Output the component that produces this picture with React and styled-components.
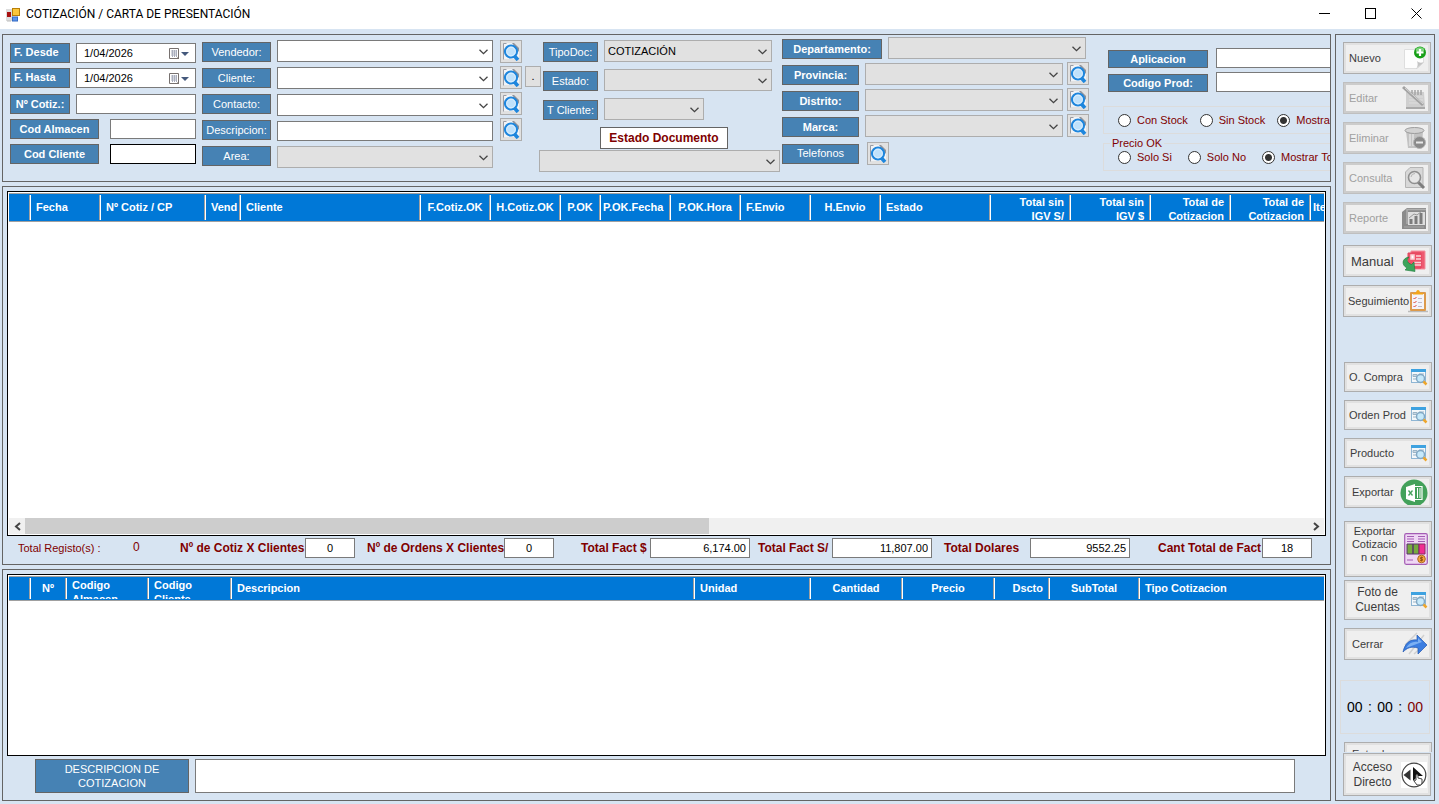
import React from "react";
import styled, { createGlobalStyle, css } from "styled-components";

const Global = createGlobalStyle`
  *, *::before, *::after { box-sizing: border-box; }
  body { margin: 0; background: #d7e4f2; }
  body, button, input, select, textarea {
    font-family: "Liberation Sans", Arial, sans-serif;
    font-size: 11px;
    line-height: 13px;
    color: #000;
  }
`;

/* ---------- window ---------- */
const Window = styled.div`
  min-height: 100vh;
  display: flex;
  flex-direction: column;
`;
const TitleBar = styled.header`
  height: 29px;
  flex: none;
  display: flex;
  align-items: center;
  gap: 6px;
  padding-left: 6px;
  background: #fff;
`;
const Title = styled.h1`
  margin: 0;
  flex: 1;
  font: 400 12px/16px Roboto, "Open Sans", sans-serif;
  padding-bottom: 2px;
`;
const WindowButton = styled.button`
  width: 46px;
  height: 28px;
  padding: 0 0 2px;
  border: 0;
  background: none;
  display: grid;
  place-items: center;
`;
const Body = styled.div`
  flex: 1;
  display: grid;
  grid-template-columns: minmax(0, 1fr) 100px;
  gap: 4px;
  padding: 5px 4px 3px 2px;
`;
const Main = styled.main`
  display: flex;
  flex-direction: column;
  gap: 4px;
  min-width: 0;
`;
const panel = css`
  border: 1px solid #646464;
  background: #d7e4f2;
`;

/* ---------- filters ---------- */
const Filters = styled.form`
  ${panel}
  flex: none;
  height: 148px;
  display: flex;
  align-items: flex-start;
  overflow: hidden;
  padding-left: 7px;
`;
const Column = styled.div`
  flex: none;
  display: flex;
  flex-direction: column;
  align-items: flex-start;
  gap: ${(p) => p.$gap}px;
  padding-top: ${(p) => p.$top || 0}px;
  margin-right: ${(p) => p.$after || 0}px;
`;
const Row = styled.div`
  display: flex;
  flex: none;
  align-items: ${(p) => p.$align || "flex-start"};
  gap: ${(p) => p.$gap || 0}px;
  min-height: ${(p) => p.$min || 0}px;
  padding-left: ${(p) => p.$indent || 0}px;
  margin-top: ${(p) => p.$before || 0}px;
`;
const Tag = styled.label`
  flex: none;
  display: flex;
  align-items: center;
  justify-content: ${(p) => (p.$left ? "flex-start" : "center")};
  padding-left: ${(p) => (p.$left ? 3 : 0)}px;
  padding-bottom: ${(p) => (p.$left ? 2 : 0)}px;
  width: ${(p) => p.$w}px;
  height: ${(p) => p.$h || 20}px;
  border: 1px solid #646464;
  background: #4682b4;
  color: #fff;
  font-weight: ${(p) => (p.$bold ? 700 : 400)};
  white-space: nowrap;
`;
const TextBox = styled.input`
  flex: none;
  width: ${(p) => p.$w}px;
  height: 20px;
  padding: 0 3px;
  border: 1px solid ${(p) => (p.$active ? "#000" : "#7a7a7a")};
  border-radius: 0;
  background: #fff;
  text-align: ${(p) => p.$align || "left"};
  outline: 0;
`;
const DateBox = styled.div`
  display: flex;
  align-items: center;
  width: 120px;
  height: 20px;
  border: 1px solid #7a7a7a;
  background: #fff;
`;
const DateInput = styled.input`
  flex: 1;
  min-width: 0;
  height: 18px;
  border: 0;
  padding: 0 0 0 7px;
  background: none;
  outline: 0;
`;
const DateButton = styled.button`
  border: 0;
  background: none;
  padding: 0;
  width: 32px;
  height: 18px;
  display: grid;
  place-items: center;
`;
const SelectShell = styled.div`
  position: relative;
  flex: none;
  width: ${(p) => p.$w}px;
  height: 22px;
  svg {
    position: absolute;
    right: 5px;
    top: 9px;
    pointer-events: none;
  }
`;
const SelectBox = styled.select`
  appearance: none;
  width: 100%;
  height: 100%;
  padding: 0 20px 0 3px;
  border: 1px solid ${(p) => (p.$white ? "#7a7a7a" : "#adadad")};
  border-radius: 0;
  background: ${(p) => (p.$white ? "#fff" : "#e1e1e1")};
  outline: 0;
`;
const SmallButton = styled.button`
  flex: none;
  width: ${(p) => p.$w || 22}px;
  height: ${(p) => p.$h || 23}px;
  padding: 0;
  border: 1px solid #adadad;
  background: #e1e1e1;
  display: grid;
  place-items: center;
`;
const StatusHeading = styled.label`
  width: 128px;
  height: 22px;
  display: grid;
  place-items: center;
  align-self: center;
  border: 1px solid #646464;
  background: #fff;
  color: #800000;
  font-size: 12px;
  font-weight: 700;
`;
const RadioGroup = styled.fieldset`
  position: relative;
  margin: 0;
  width: 260px;
  height: 28px;
  padding: 0 0 0 14px;
  border: 1px solid #dcdcdc;
  display: flex;
  align-items: center;
  gap: ${(p) => p.$gap}px;
`;
const Legend = styled.legend`
  position: absolute;
  left: 6px;
  top: -7px;
  padding: 0 2px;
  background: #d7e4f2;
  color: #800000;
`;
const RadioLabel = styled.label`
  display: flex;
  align-items: center;
  gap: 6px;
  color: #800000;
  white-space: nowrap;
`;
const RadioInput = styled.input`
  appearance: none;
  flex: none;
  width: 13px;
  height: 13px;
  margin: 0;
  border: 1px solid #333;
  border-radius: 50%;
  background: #fff;
  &:checked {
    background: radial-gradient(circle, #333 0 3px, #fff 4px);
  }
`;

/* ---------- grids ---------- */
const ListPanel = styled.section`
  ${panel}
  flex: ${(p) => (p.$grow ? "1 0 auto" : "none")};
  display: flex;
  flex-direction: column;
  padding: 4px;
`;
const GridBox = styled.div`
  flex: 1 0 auto;
  min-height: ${(p) => p.$min}px;
  border: 1px solid #000;
  background: #fff;
  padding: 1px 1px 0;
  display: flex;
  flex-direction: column;
  overflow: hidden;
`;
const TableClip = styled.div`
  flex: 1;
  overflow: hidden;
`;
const Table = styled.table`
  table-layout: fixed;
  border-collapse: collapse;
  width: ${(p) => (p.$w ? `${p.$w}px` : "100%")};
`;
const HeadCell = styled.th`
  padding: 0 0 1px;
  height: ${(p) => p.$h + 3}px;
  background: #0078d7;
  border-top: 1px solid #a0a0a0;
  border-bottom: 1px solid #a0a0a0;
  &:last-child > div {
    box-shadow: none;
  }
`;
const HeadText = styled.div`
  height: ${(p) => p.$h}px;
  overflow: hidden;
  padding: 0 7px 0 ${(p) => (p.$tight ? 2 : 5)}px;
  display: grid;
  align-content: safe center;
  text-align: ${(p) => p.$align || "left"};
  color: #fff;
  font-weight: 700;
  line-height: 14px;
  white-space: ${(p) => (p.$wrap ? "pre-line" : "nowrap")};
  box-shadow: inset -1px 0 #fff, inset -2px 0 #a0a0a0;
`;
const ScrollBar = styled.div`
  flex: none;
  height: 17px;
  display: grid;
  grid-template-columns: 16px minmax(0, 1fr) 16px;
  background: #f0f0f0;
  border-bottom: 1px solid #fff;
`;
const ScrollArrow = styled.button`
  border: 0;
  padding: 0;
  background: none;
  display: grid;
  place-items: center;
`;
const ScrollThumb = styled.div`
  width: 53.3%;
  height: 16px;
  background: #cdcdcd;
`;
const Totals = styled.div`
  flex: none;
  height: 24px;
  padding: 1px 0 0 11px;
  display: grid;
  grid-template-columns: 162px 187px 214px 177px 186px 214px 154px;
`;
const Total = styled.div`
  display: flex;
  align-items: center;
  height: 21px;
`;
const TotalLabel = styled.label`
  flex: none;
  width: ${(p) => p.$w}px;
  padding-top: 2px;
  color: #800000;
  font-size: ${(p) => (p.$plain ? 11 : 12)}px;
  font-weight: ${(p) => (p.$plain ? 400 : 700)};
  white-space: nowrap;
`;
const Count = styled.output`
  color: #800000;
  font-size: 12px;
`;
const Notes = styled.div`
  flex: none;
  display: grid;
  grid-template-columns: 154px minmax(0, 1fr);
  gap: 6px;
  padding: 3px 31px 3px 28px;
`;
const NotesLabel = styled.label`
  display: grid;
  place-items: center;
  text-align: center;
  height: 34px;
  border: 1px solid #646464;
  background: #4682b4;
  color: #fff;
  line-height: 14px;
  padding: 0 24px;
`;
const NotesBox = styled.textarea`
  height: 34px;
  resize: none;
  border: 1px solid #7a7a7a;
  background: #fff;
  outline: 0;
`;

/* ---------- side bar ---------- */
const Side = styled.aside`
  ${panel}
  display: flex;
  flex-direction: column;
  padding: 7px 2px 0 7px;
`;
const SideGroup = styled.div`
  display: flex;
  flex-direction: column;
  gap: 8px;
  padding-left: ${(p) => p.$indent || 0}px;
  padding-right: ${(p) => p.$inset || 0}px;
  margin-bottom: ${(p) => p.$after || 0}px;
`;
const SideButton = styled.button`
  width: 100%;
  height: ${(p) => p.$h || 32}px;
  flex: none;
  display: grid;
  grid-template-columns: minmax(0, 1fr) auto;
  align-items: center;
  padding: 0 3px 0 ${(p) => (p.$center ? 0 : p.$near ? 4 : p.$far ? 7 : 5)}px;
  border: 1px solid #adadad;
  background: #efefef;
  box-shadow: inset 0 0 0 2px #e1e1e1;
  color: #3c3c3c;
  font-size: ${(p) => p.$size || 11}px;
  line-height: ${(p) => (p.$size ? 15 : 13)}px;
  text-align: ${(p) => (p.$center ? "center" : "left")};
  white-space: ${(p) => (p.$center ? "pre-line" : "nowrap")};
  &:disabled {
    border-color: #bfbfbf;
    box-shadow: inset 0 0 0 2px #ccc;
    color: #a0a0a0;
  }
`;
const TopText = styled.span`
  align-self: start;
  padding-top: 3px;
`;
const HiddenSlot = styled.div`
  height: 10px;
  overflow: hidden;
  margin-bottom: 1px;
  padding-left: 1px;
`;
const Timer = styled.div`
  height: 54px;
  margin: 0 2px 8px -3px;
  border: 1px solid #dcdcdc;
  display: flex;
  align-items: center;
  justify-content: space-between;
  padding: 0 6px;
  font-size: 14px;
`;
const Seconds = styled.span`
  color: #800000;
`;

/* ---------- drawings ---------- */
const Chevron = () => (
  <svg width="9" height="6" viewBox="0 0 9 6" fill="none" stroke="#444" strokeWidth="1.3">
    <path d="M.5.7l4 4 4-4" />
  </svg>
);
const Lens = () => (
  <svg width="18" height="19" viewBox="0 0 18 19">
    <path d="M2 1h9l6 6v10H2z" fill="#f1f3f6" />
    <path d="M1.500 17.500V1.500h3" fill="none" stroke="#9a9da5" />
    <path d="M10 1h2l5 5v4z" fill="#8d929c" />
    <path d="M12 13.500l4 4.500" stroke="#1e86dd" strokeWidth="3.600" />
    <circle cx="9" cy="9.500" r="6" fill="#bfe1fb" stroke="#1e86dd" strokeWidth="2.200" />
    <circle cx="9" cy="9.500" r="4.400" fill="none" stroke="#e9f5ff" strokeWidth=".8" />
  </svg>
);
const CalendarIcon = () => (
  <svg width="22" height="13" viewBox="0 0 22 13">
    <path d="M1.500 1.500h9v10h-9z" fill="#fff" stroke="#77716f" />
    <path d="M3 4h6M3 6h6M3 8h6M4.500 3v7M6.500 3v7M8.500 3v7" stroke="#a9aebd" />
    <path d="M8 12l3-3v3z" fill="#77716f" />
    <path d="M13 5h8l-4 4z" fill="#44597c" />
  </svg>
);
const FormIcon = () => (
  <svg width="14" height="14" viewBox="0 0 14 14">
    <rect y="1" width="7" height="12" fill="#ddd" />
    <rect x="1" y="4" width="4" height="5" fill="#a81010" />
    <rect x="6.500" y=".5" width="7" height="7" fill="#fbc63a" stroke="#b87f08" />
    <rect x="6.500" y="9" width="5" height="4" fill="#5c96ec" stroke="#346bc4" />
    <path d="M1 13h4" stroke="#bbb" />
  </svg>
);
const NewIcon = () => (
  <svg width="24" height="26" viewBox="0 0 24 26">
    <path d="M1.500 4.500h19v13l-6 6h-13z" fill="#fdfdfd" stroke="#dedede" />
    <path d="M13 24c2-3 2-5 1-8 2 2 4 2 7 1z" fill="#c4c4c4" />
    <circle cx="17" cy="7.500" r="6" fill="#17a017" />
    <ellipse cx="17" cy="4.800" rx="4.200" ry="2.600" fill="#7bd47b" />
    <path d="M17 4v7M13.500 7.500h7" stroke="#fff" strokeWidth="2.200" />
  </svg>
);
const EditIcon = () => (
  <svg width="26" height="26" viewBox="0 0 26 26">
    <path d="M5 7h18l1 15H5z" fill="#cfcfcf" />
    <path d="M5 22h19v2H5z" fill="#aaa" />
    <path d="M11 5v5M14 5v5M17 5v5M20 5v5" stroke="#a5a5a5" strokeWidth="1.500" />
    <path d="M8 12h14M8 15h14M8 18h14" stroke="#dedede" />
    <path d="M2 2l20 18" stroke="#a2a2a2" strokeWidth="3" />
    <path d="M4 3l18 16" stroke="#d6d6d6" />
  </svg>
);
const DeleteIcon = () => (
  <svg width="24" height="26" viewBox="0 0 24 26">
    <path d="M3 6h17l-1 17H5z" fill="#c2c2c2" />
    <path d="M7 9v12M10 9v12" stroke="#e2e2e2" strokeWidth="1.500" />
    <ellipse cx="11.500" cy="5.500" rx="9.500" ry="3" fill="#d2d2d2" stroke="#9d9d9d" />
    <circle cx="16.500" cy="17.500" r="6" fill="#8a8a8a" stroke="#b5b5b5" />
    <path d="M13 17.500h7" stroke="#e8e8e8" strokeWidth="2" />
  </svg>
);
const QueryIcon = () => (
  <svg width="24" height="26" viewBox="0 0 24 26">
    <path d="M7 2.500h13v20H2.500V7z" fill="#d8d8d8" stroke="#b4b4b4" />
    <path d="M15 17l6 6" stroke="#7d7d7d" strokeWidth="3" />
    <circle cx="11.500" cy="12.500" r="6" fill="#e6e6e6" stroke="#8f8f8f" strokeWidth="1.600" />
    <path d="M8 12a4 4 0 0 1 4-3.500" fill="none" stroke="#b5b5b5" />
  </svg>
);
const ReportIcon = () => (
  <svg width="26" height="26" viewBox="0 0 26 26">
    <path d="M1 7l5-4h19v21H1z" fill="#8b8b8b" />
    <path d="M6 4.500h19M6 4v15" stroke="#b0b0b0" strokeWidth="1.500" />
    <path d="M7 7h17v13H7z" fill="#dedede" />
    <path d="M10 19v-5M15 19v-8M20 19V8" stroke="#7c7c7c" strokeWidth="3" />
    <path d="M8 13l5-4 3 1 5-4" stroke="#989898" fill="none" />
    <path d="M3 22h20" stroke="#a8a8a8" />
  </svg>
);
const ManualIcon = () => (
  <svg width="26" height="26" viewBox="0 0 26 26">
    <path d="M9 3h14v18H9z" fill="#ee5a70" stroke="#f3909d" />
    <path d="M6 5h13v15H6z" fill="#ef5268" stroke="#e0455c" />
    <path d="M9 7h3v4H9zM14 8h5M14 11h5M12 14.500h7M12 17h7" stroke="#fbd3d8" strokeWidth="1.500" fill="#fff" />
    <path d="M7 9c-7 1-8 8-2 11l-2 2 10 1.500-1-9.500-2.500 2.500C5 15 4 12 7 9z" fill="#3da55b" stroke="#1c7a3a" strokeWidth=".6" />
  </svg>
);
const ClipboardIcon = () => (
  <svg width="20" height="24" viewBox="0 0 20 24">
    <path d="M0 22.500h20" stroke="#bbb" strokeWidth="1.500" />
    <rect x="2" y="3" width="16" height="19" rx="1" fill="#dc9a4c" />
    <rect x="4" y="5" width="12" height="15" fill="#f4f4fa" />
    <path d="M5 5.500V4h3c0-4 4-4 4 0h3v1.500z" fill="#f4a619" />
    <path d="M5.500 9l1 1 2-2M5.500 13l1 1 2-2M5.500 17l1 1 2-2" stroke="#e04a3a" fill="none" />
    <path d="M10 9.500h4M10 13.500h4M10 17.500h4" stroke="#bcbccc" />
  </svg>
);
const FindFormIcon = () => (
  <svg width="18" height="18" viewBox="0 0 18 18">
    <rect x="1.500" y="1.500" width="14" height="13" fill="#f4f8fb" stroke="#8fb6d4" />
    <path d="M1 1h15v3H1z" fill="#3ea2e0" />
    <path d="M3 6.500h4v2H3zM3 11h4M9 6h5" stroke="#9bb4c6" fill="#c9d8e4" />
    <circle cx="10.500" cy="10.500" r="4" fill="#c6e9fa" stroke="#82a8c4" strokeWidth="1.500" />
    <path d="M13.500 13.500l3 3" stroke="#eda62c" strokeWidth="2.500" />
  </svg>
);
const ExcelIcon = () => (
  <svg width="28" height="26" viewBox="0 0 28 26">
    <circle cx="14" cy="14" r="13.500" fill="#43a15a" />
    <path d="M15 7.500h7v13h-7" fill="none" stroke="#fff" strokeWidth="1.200" />
    <path d="M17.500 9v10M20 9v10" stroke="#fff" />
    <path d="M6 8l9-3v18l-9-3z" fill="#fff" />
    <path d="M8.500 11.500l4 5M12.500 11.500l-4 5" stroke="#43a15a" strokeWidth="1.300" />
  </svg>
);
const InvoiceIcon = () => (
  <svg width="24" height="32" viewBox="0 0 24 32">
    <rect x=".7" y=".7" width="22.600" height="30.600" rx="1.500" fill="#efd7f4" stroke="#a45cb4" strokeWidth="1.200" />
    <path d="M3 3.500h7M3 6h7M3 8.500h7M14 3.500h7M14 6h7M14 8.500h7M3 27h6" stroke="#a45cb4" />
    <path d="M3 11h6v10H3zM9 11h6v10H9z" fill="#76a93f" stroke="#59366b" />
    <path d="M15 11h6v10h-6z" fill="#f02c91" stroke="#8a2864" />
    <circle cx="17.500" cy="26" r="3.800" fill="#f3a53c" stroke="#b06b22" />
    <path d="M19 24.500h-2.500v1.500h2v1.500H16M17.500 23.500v5" stroke="#8c4b14" fill="none" strokeWidth=".8" />
  </svg>
);
const ExitIcon = () => (
  <svg width="26" height="24" viewBox="0 0 26 24">
    <path d="M3 13L15 1M7 22L22 3M12 22l11-10" stroke="#d0d0d0" strokeWidth="1.500" />
    <path d="M1 20C3 11 8 7 15 8V3l10 10-9 9v-6C9 14 5 16 1 20z" fill="#3b7de0" stroke="#2559b0" strokeWidth=".7" />
    <path d="M4 16c3-5 7-7 12-6V6l4 4z" fill="#7bb0f3" />
  </svg>
);
const ShortcutIcon = () => (
  <svg width="26" height="26" viewBox="0 0 26 26">
    <rect width="26" height="26" fill="#fff" />
    <circle cx="13" cy="13" r="11.800" fill="#fff" stroke="#444" strokeWidth="1.200" />
    <path d="M9.500 7.500v11l-7-5.500z" fill="#333" />
    <path d="M12 5l10 9h-5l-5 5z" fill="#111" />
    <path d="M15 13c1-1 2 0 2 1v2l4 1v4l-1 2h-4l-3-4 2-1z" fill="#fff" stroke="#444" />
  </svg>
);

/* ---------- composed controls ---------- */
const Combo = ({ id, w, white, value, label }) => (
  <SelectShell $w={w}>
    <SelectBox id={id} $white={white} aria-label={label}>
      <option>{value || ""}</option>
    </SelectBox>
    <Chevron />
  </SelectShell>
);
const DateField = ({ id, value }) => (
  <DateBox>
    <DateInput id={id} defaultValue={value} />
    <DateButton type="button" aria-label="Abrir calendario"><CalendarIcon /></DateButton>
  </DateBox>
);
const Search = ({ label }) => (
  <SmallButton type="button" aria-label={`Buscar ${label}`}><Lens /></SmallButton>
);
const Radio = ({ name, text, checked }) => (
  <RadioLabel>
    <RadioInput type="radio" name={name} defaultChecked={checked} />
    {text}
  </RadioLabel>
);
const Grid = ({ columns, width, height }) => (
  <TableClip>
    <Table $w={width}>
      <colgroup>
        {columns.map(([, w], i) => <col key={i} style={w ? { width: w } : undefined} />)}
      </colgroup>
      <thead>
        <tr>
          {columns.map(([text, , align, tight], i) => (
            <HeadCell key={i} $h={height}>
              <HeadText $h={height} $align={align} $tight={tight} $wrap={text.includes("\n")}>{text}</HeadText>
            </HeadCell>
          ))}
        </tr>
      </thead>
      <tbody />
    </Table>
  </TableClip>
);

const QUOTES = [
  ["", 22], ["Fecha", 70], ["Nº Cotiz / CP", 105], ["Vend", 35], ["Cliente", 180],
  ["F.Cotiz.OK", 70, "center"], ["H.Cotiz.OK", 70, "center"], ["P.OK", 40, "center"],
  ["P.OK.Fecha", 70, "left", true], ["P.OK.Hora", 70, "center"], ["F.Envio", 70],
  ["H.Envio", 70, "center"], ["Estado", 110], ["Total sin\nIGV S/", 80, "right"],
  ["Total sin\nIGV $", 80, "right"], ["Total de\nCotizacion", 80, "right"],
  ["Total de\nCotizacion", 80, "right"], ["Items", 80, "left", true],
];
const ITEMS = [
  ["", 22], ["Nº", 36, "center"], ["Codigo\nAlmacen", 82], ["Codigo\nCliente", 83],
  ["Descripcion", 463], ["Unidad", 116], ["Cantidad", 92, "center"], ["Precio", 92, "center"],
  ["Dscto", 55, "right"], ["SubTotal", 90, "center"], ["Tipo Cotizacion", null],
];
const TOTALS = [
  ["Nº de Cotiz X Clientes", 125, "0", 50, "center"],
  ["Nº de Ordens X Clientes", 137, "0", 50, "center"],
  ["Total Fact $", 69, "6,174.00", 100, "right"],
  ["Total Fact S/", 74, "11,807.00", 100, "right"],
  ["Total Dolares", 86, "9552.25", 100, "right"],
  ["Cant Total de Fact", 104, "18", 50, "center"],
];

export default function App() {
  return (
    <>
      <Global />
      <Window>
        <TitleBar>
          <FormIcon />
          <Title>COTIZACIÓN / CARTA DE PRESENTACIÓN</Title>
          <Row>
            <WindowButton aria-label="Minimizar">
              <svg width="11" height="11"><path d="M0 5.500h11" stroke="#000" /></svg>
            </WindowButton>
            <WindowButton aria-label="Maximizar">
              <svg width="11" height="11"><rect x=".5" y=".5" width="10" height="10" fill="none" stroke="#000" /></svg>
            </WindowButton>
            <WindowButton aria-label="Cerrar ventana">
              <svg width="11" height="11"><path d="M.5.5l10 10M10.500.5l-10 10" stroke="#000" /></svg>
            </WindowButton>
          </Row>
        </TitleBar>
        <Body>
          <Main>
            <Filters>
              <Column $gap={5} $top={8} $after={6}>
                <Row $gap={6}><Tag $w={60} $bold $left htmlFor="desde">F. Desde</Tag><DateField id="desde" value="1/04/2026" /></Row>
                <Row $gap={6}><Tag $w={60} $bold $left htmlFor="hasta">F. Hasta</Tag><DateField id="hasta" value="1/04/2026" /></Row>
                <Row $gap={6} $before={1}><Tag $w={60} $bold htmlFor="num">Nº Cotiz.:</Tag><TextBox id="num" $w={120} /></Row>
                <Row $gap={11}><Tag $w={89} $bold htmlFor="alm">Cod Almacen</Tag><TextBox id="alm" $w={86} /></Row>
                <Row $gap={11}><Tag $w={89} $bold htmlFor="cli">Cod Cliente</Tag><TextBox id="cli" $w={86} $active /></Row>
              </Column>
              <Column $gap={6} $top={7} $after={6}>
                <Tag $w={69} htmlFor="vendedor">Vendedor:</Tag>
                <Tag $w={69} htmlFor="cliente">Cliente:</Tag>
                <Tag $w={69} htmlFor="contacto">Contacto:</Tag>
                <Tag $w={69} htmlFor="descripcion">Descripcion:</Tag>
                <Tag $w={69} htmlFor="area">Area:</Tag>
              </Column>
              <Column $gap={5} $top={5} $after={7}>
                <Combo id="vendedor" w={216} white />
                <Combo id="cliente" w={216} white />
                <Combo id="contacto" w={216} white />
                <TextBox id="descripcion" $w={216} />
                <Combo id="area" w={216} />
              </Column>
              <Column $gap={3} $top={5} $after={-2}>
                <Search label="vendedor" />
                <Row $gap={3}>
                  <Search label="cliente" />
                  <SmallButton type="button" $w={16} $h={21}>.</SmallButton>
                </Row>
                <Search label="contacto" />
                <Search label="descripcion" />
              </Column>
              <Column $gap={1} $top={5} $after={2}>
                <Row $gap={6} $indent={4}>
                  <Column $gap={9} $top={2}>
                    <Tag $w={55} htmlFor="tipo">TipoDoc:</Tag>
                    <Tag $w={55} htmlFor="estado">Estado:</Tag>
                    <Tag $w={55} htmlFor="tcliente">T Cliente:</Tag>
                  </Column>
                  <Column $gap={7}>
                    <Combo id="tipo" w={168} value="COTIZACIÓN" />
                    <Combo id="estado" w={168} />
                    <Combo id="tcliente" w={100} />
                  </Column>
                </Row>
                <Row $before={6} $indent={61}><StatusHeading htmlFor="estadodoc">Estado Documento</StatusHeading></Row>
                <Combo id="estadodoc" w={241} />
              </Column>
              <Column $gap={3} $top={1}>
                <Row $gap={6} $min={23} $align="flex-end"><Tag $w={100} $bold htmlFor="dep">Departamento:</Tag><Combo id="dep" w={198} /></Row>
                {["Provincia", "Distrito", "Marca"].map((name) => (
                  <Row key={name} $gap={4} $align="flex-end">
                    <Row $gap={6} $align="flex-end"><Tag $w={77} $bold htmlFor={name}>{name}:</Tag><Combo id={name} w={198} /></Row>
                    <Search label={name} />
                  </Row>
                ))}
                <Row $gap={8} $before={2} $align="center"><Tag as="span" $w={77}>Telefonos</Tag><Search label="telefonos" /></Row>
              </Column>
              <Column $gap={4} $top={13}>
                <Row $indent={19} $gap={8} $align="flex-end"><Tag $w={100} $h={18} $bold htmlFor="app">Aplicacion</Tag><TextBox id="app" $w={147} /></Row>
                <Row $indent={19} $gap={8} $align="flex-end"><Tag $w={100} $h={18} $bold htmlFor="prod">Codigo Prod:</Tag><TextBox id="prod" $w={147} /></Row>
                <Row $indent={14} $before={10}>
                  <RadioGroup $gap={12} aria-label="Stock">
                    <Radio name="stock" text="Con Stock" />
                    <Radio name="stock" text="Sin Stock" />
                    <Radio name="stock" text="Mostrar Todos" checked />
                  </RadioGroup>
                </Row>
                <Row $indent={14} $before={5}>
                  <RadioGroup $gap={16}>
                    <Legend>Precio OK</Legend>
                    <Radio name="precio" text="Solo Si" />
                    <Radio name="precio" text="Solo No" />
                    <Radio name="precio" text="Mostrar Todos" checked />
                  </RadioGroup>
                </Row>
              </Column>
            </Filters>

            <ListPanel $grow>
              <GridBox $min={344}>
                <Grid columns={QUOTES} width={1382} height={25} />
                <ScrollBar>
                  <ScrollArrow aria-label="Izquierda">
                    <svg width="7" height="9" fill="none" stroke="#444" strokeWidth="2"><path d="M6 1L2 4.500 6 8" /></svg>
                  </ScrollArrow>
                  <ScrollThumb />
                  <ScrollArrow aria-label="Derecha">
                    <svg width="7" height="9" fill="none" stroke="#444" strokeWidth="2"><path d="M1 1l4 3.500L1 8" /></svg>
                  </ScrollArrow>
                </ScrollBar>
              </GridBox>
              <Totals>
                <Total><TotalLabel as="span" $w={115} $plain>Total Registo(s) :</TotalLabel><Count>0</Count></Total>
                {TOTALS.map(([label, lw, value, w, align], i) => (
                  <Total key={label}>
                    <TotalLabel htmlFor={`total${i}`} $w={lw}>{label}</TotalLabel>
                    <TextBox id={`total${i}`} $w={w} $align={align} defaultValue={value} />
                  </Total>
                ))}
              </Totals>
            </ListPanel>

            <ListPanel>
              <GridBox $min={182}>
                <Grid columns={ITEMS} height={21} />
              </GridBox>
              <Notes>
                <NotesLabel htmlFor="notas">DESCRIPCION DE COTIZACION</NotesLabel>
                <NotesBox id="notas" />
              </Notes>
            </ListPanel>
          </Main>

          <Side>
            <SideGroup $after={11} $inset={1}>
              <SideButton>Nuevo<NewIcon /></SideButton>
              <SideButton disabled>Editar<EditIcon /></SideButton>
              <SideButton disabled>Eliminar<DeleteIcon /></SideButton>
              <SideButton disabled>Consulta<QueryIcon /></SideButton>
              <SideButton disabled>Reporte<ReportIcon /></SideButton>
            </SideGroup>
            <SideGroup $after={45}>
              <SideButton $size={13} $far>Manual<ManualIcon /></SideButton>
              <SideButton $near>Seguimiento<ClipboardIcon /></SideButton>
            </SideGroup>
            <SideGroup $indent={1} $after={13}>
              <SideButton $h={30} $near>O. Compra<FindFormIcon /></SideButton>
              <SideButton $h={30} $near>Orden Prod<FindFormIcon /></SideButton>
              <SideButton $h={30}>Producto<FindFormIcon /></SideButton>
              <SideButton $far>Exportar<ExcelIcon /></SideButton>
            </SideGroup>
            <SideGroup $indent={1} $after={3}>
              <SideButton $h={56} $center><TopText>{"Exportar\nCotizacio\nn con"}</TopText><InvoiceIcon /></SideButton>
            </SideGroup>
            <SideGroup $indent={1} $after={20}>
              <SideButton $h={40} $size={12} $center>{"Foto de\nCuentas"}<FindFormIcon /></SideButton>
              <SideButton $far>Cerrar<ExitIcon /></SideButton>
            </SideGroup>
            <Timer><span>00</span><span>:</span><span>00</span><span>:</span><Seconds>00</Seconds></Timer>
            <HiddenSlot><SideButton $h={24} $far>Entrada</SideButton></HiddenSlot>
            <SideGroup $inset={1}>
              <SideButton $h={43} $size={12} $center>{"Acceso\nDirecto"}<ShortcutIcon /></SideButton>
            </SideGroup>
          </Side>
        </Body>
      </Window>
    </>
  );
}
